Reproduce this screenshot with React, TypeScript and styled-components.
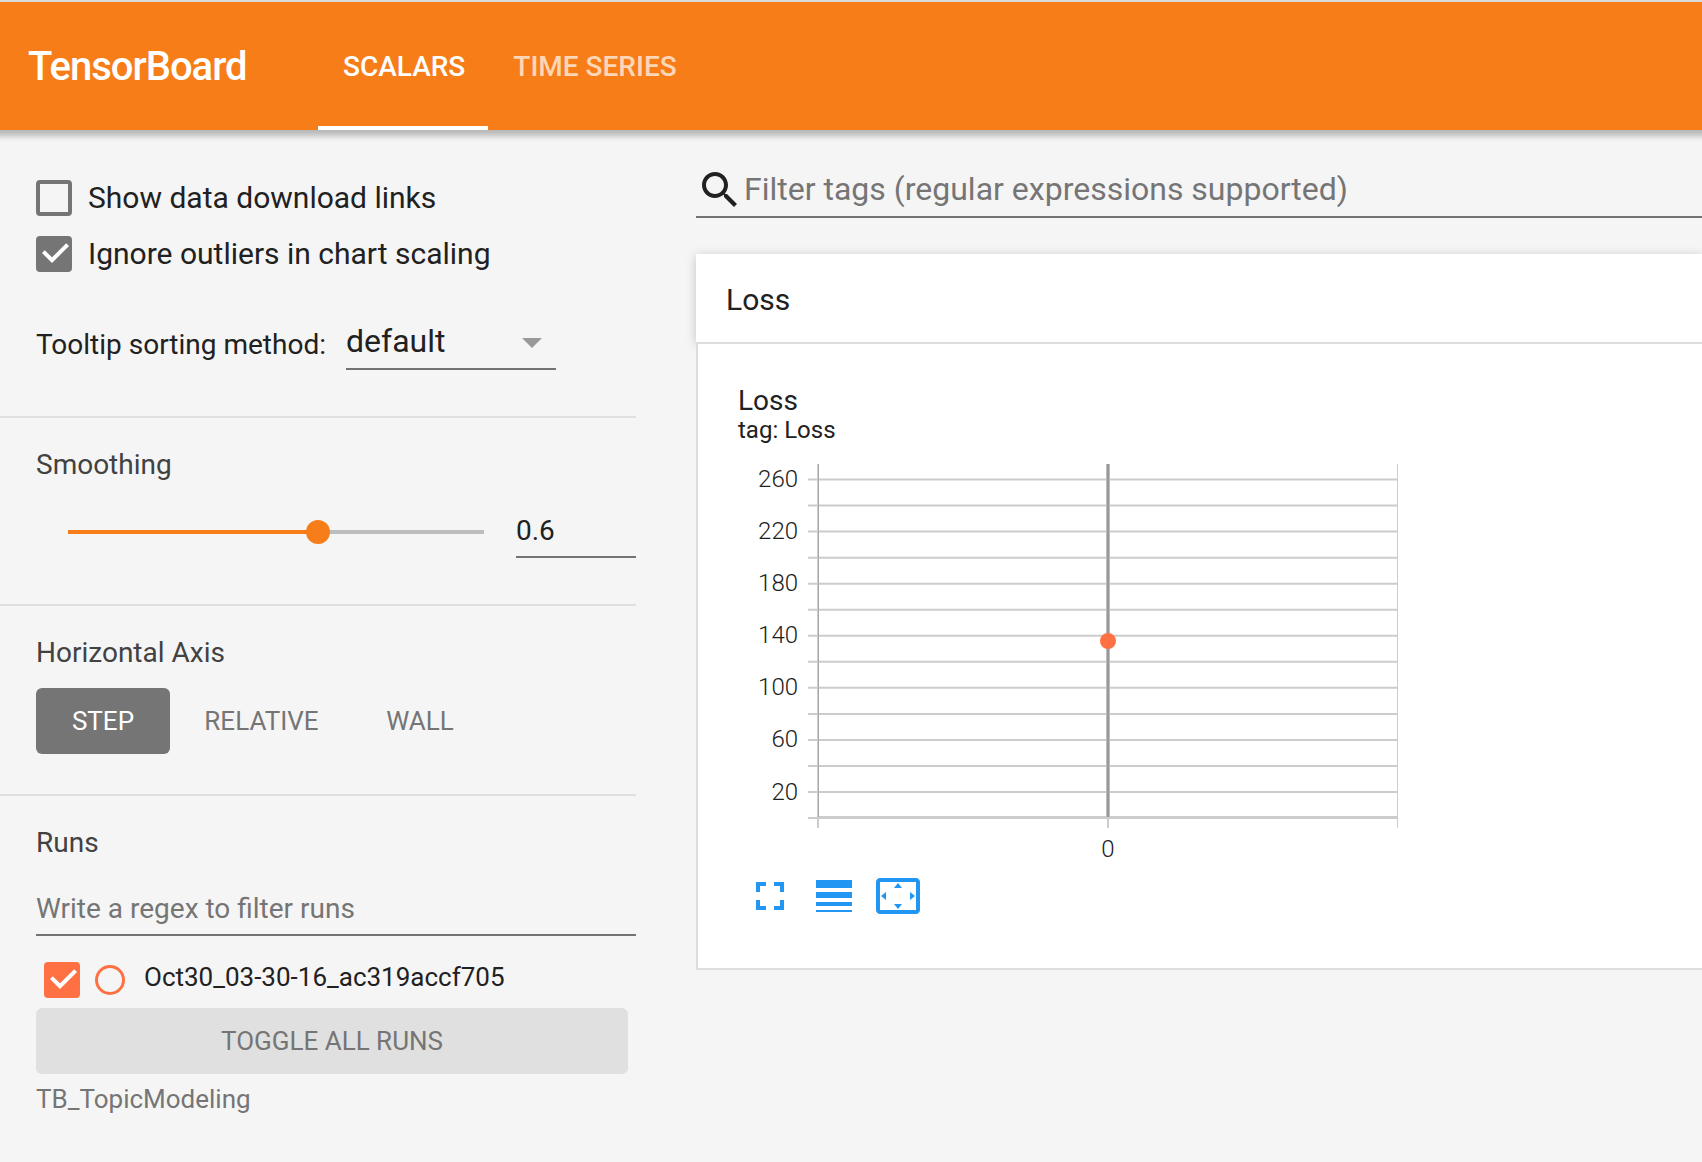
import React from "react";
import styled, { createGlobalStyle, css } from "styled-components";

const GlobalStyle = createGlobalStyle`
  * { box-sizing: border-box; }
  body {
    margin: 0;
    background: #f5f5f5;
    color: #212121;
    font-family: Roboto, "Noto Sans", sans-serif;
    -webkit-font-smoothing: antialiased;
  }
`;

const Page = styled.div`
  display: flex;
  flex-direction: column;
  height: 1162px;
  overflow: hidden;
`;

const Header = styled.header`
  position: relative;
  z-index: 1;
  display: flex;
  flex: none;
  height: 130px;
  padding-left: 28px;
  background: #f77d18;
  border-top: 2px solid #d9d9d9;
  box-shadow: 0 0 6px 6px rgba(0, 0, 0, 0.25);
`;

const Title = styled.h1`
  width: 290px;
  margin: 0;
  color: #fff;
  font-size: 40px;
  font-weight: 500;
  letter-spacing: -1px;
  line-height: 130px;
`;

const Tab = styled.button<{ $active?: boolean }>`
  height: 128px;
  padding: 5px 23px 0 25px;
  border: 0;
  border-bottom: 4px solid ${(p) => (p.$active ? "#fff" : "transparent")};
  background: none;
  color: ${(p) => (p.$active ? "#fff" : "rgba(255, 255, 255, 0.7)")};
  font: 500 28px Roboto, sans-serif;
`;

const Columns = styled.div`
  display: flex;
  flex: 1;
  min-height: 0;
`;

const Sidebar = styled.aside`
  flex: none;
  width: 636px;
`;

const Section = styled.section<{ $height: number; $top: number; $last?: boolean }>`
  height: ${(p) => p.$height}px;
  padding: ${(p) => p.$top}px 0 0 36px;
  border-bottom: ${(p) => (p.$last ? "0" : "2px solid #e0e0e0")};
`;

const CheckRow = styled.label`
  display: flex;
  align-items: center;
  gap: 16px;
  height: 36px;
  margin-bottom: 20px;
  font-size: 30px;
  line-height: 36px;
`;

const Box = styled.span<{ $fill?: string }>`
  display: flex;
  flex: none;
  width: 36px;
  height: 36px;
  border-radius: 4px;
  border: ${(p) => (p.$fill ? "0" : "4px solid #757575")};
  background: ${(p) => p.$fill ?? "transparent"};
`;

const SortRow = styled.div`
  display: flex;
  height: 60px;
  margin-top: 38px;
  font-size: 28px;
`;

const SortLabel = styled.span`
  width: 310px;
  padding-top: 18px;
  line-height: 34px;
`;

const Dropdown = styled.div`
  display: flex;
  align-items: center;
  justify-content: space-between;
  width: 210px;
  height: 60px;
  padding: 4px 14px 0 0;
  border-bottom: 2px solid #737373;
  font-size: 32px;
`;

const Caret = styled.span`
  border: 10px solid transparent;
  border-top-color: #999;
  border-bottom: 0;
  margin-top: 4px;
`;

const Heading = styled.h3`
  margin: 0;
  color: #424242;
  font-size: 28px;
  font-weight: 400;
  line-height: 34px;
`;

const SliderRow = styled.div`
  display: flex;
  align-items: center;
  height: 52px;
  margin-top: 24px;
  padding-left: 32px;
`;

const Track = styled.div`
  display: flex;
  align-items: center;
  width: 416px;
  height: 4px;
  margin-right: 32px;
  background: #bdbdbd;
`;

const TrackFill = styled.div`
  height: 4px;
  background: #f77d18;
`;

const Knob = styled.div`
  flex: none;
  width: 24px;
  height: 24px;
  margin-left: -12px;
  border-radius: 50%;
  background: #f77d18;
`;

const underlined = css`
  border-bottom: 2px solid #737373;
  font-size: 28px;
`;

const NumberField = styled.div`
  ${underlined}
  width: 120px;
  height: 52px;
  line-height: 49px;
`;

const ButtonRow = styled.div`
  display: flex;
  margin-top: 18px;
`;

const Button = styled.button<{ $bg?: string; $color?: string; $width: number }>`
  display: block;
  width: ${(p) => p.$width}px;
  height: 66px;
  padding: 0;
  border: 0;
  border-radius: 6px;
  background: ${(p) => p.$bg ?? "transparent"};
  color: ${(p) => p.$color ?? "#757575"};
  font: 400 26px Roboto, sans-serif;
`;

const RegexField = styled.div`
  ${underlined}
  height: 54px;
  margin-top: 22px;
  color: #757575;
  line-height: 53px;
`;

const RunRow = styled.div`
  display: flex;
  align-items: center;
  height: 36px;
  margin: 26px 0 10px;
  padding-left: 8px;
  font-size: 26px;
`;

const RunDot = styled.span`
  width: 30px;
  height: 30px;
  margin: 0 19px 0 15px;
  border: 3px solid #ff7043;
  border-radius: 50%;
`;

const RunName = styled.span`
  line-height: 30px;
  margin-top: -6px;
`;

const LogDir = styled.div`
  margin-top: 9px;
  color: #757575;
  font-size: 26px;
  line-height: 32px;
`;

const Main = styled.main`
  flex: 1;
  padding: 24px 0 0 60px;
  min-width: 0;
`;

const Search = styled.div`
  display: flex;
  align-items: center;
  height: 64px;
  padding-top: 8px;
  border-bottom: 2px solid #737373;
  color: #757575;
  font-size: 32px;
`;

const Glyph = styled.svg`
  display: block;
  flex: none;
  width: 48px;
  height: 48px;
`;

const SearchGlyph = styled(Glyph)`
  margin-top: 2px;
  fill: #212121;
`;

const CardHeader = styled.h2`
  height: 88px;
  margin: 36px 0 0;
  padding-left: 30px;
  background: #fff;
  box-shadow: 0 2px 10px rgba(0, 0, 0, 0.2);
  font-size: 30px;
  font-weight: 400;
  line-height: 92px;
`;

const CardBody = styled.div`
  position: relative;
  height: 628px;
  padding: 40px 0 0 40px;
  background: #fff;
  border: 2px solid #ddd;
  border-right: 0;
`;

const ChartTitle = styled.div`
  font-size: 28px;
  line-height: 34px;
`;

const ChartTag = styled.div`
  font-size: 24px;
  line-height: 24px;
`;

const ChartSvg = styled.svg`
  display: block;
  width: 670px;
  height: 414px;
  margin-top: 14px;
  font: 300 24px Roboto, sans-serif;
  fill: #212121;
`;

const Actions = styled.div`
  display: flex;
  gap: 16px;
  margin: 2px 0 0 8px;
  fill: #2196f3;
`;

function Check() {
  return (
    <svg width="36" height="36" viewBox="0 0 36 36" fill="none" stroke="#fff" strokeWidth="4">
      <path d="M7.4 15.6L16 24.2L31.6 8.6" />
    </svg>
  );
}

function LossChart() {
  const left = 80;
  const right = 659.5;
  const middle = 370;
  const step = 26.04;
  const ticks = Array.from({ length: 14 }, (_, i) => i * 20);
  const y = (v: number) => 362.04 - (v / 20) * step;
  return (
    <ChartSvg viewBox="0 0 670 414">
      <g stroke="#ccc" strokeWidth="2">
        {ticks.map((v) => (
          <line key={v} x1={left - 10} x2={right} y1={y(v)} y2={y(v)} />
        ))}
        <line x1={left} x2={left} y1="8" y2="372" />
        <line x1={middle} x2={middle} y1="8" y2="372" />
        <line x1={right} x2={right} y1="8" y2="372" strokeWidth="1" />
        <line x1={left} x2={right} y1="361" y2="361" />
      </g>
      <line x1={left + 0.5} x2={left + 0.5} y1="8" y2="361" stroke="#aaa" strokeWidth="1" />
      <line x1={middle} x2={middle} y1="8" y2="361" stroke="#bdbdbd" strokeWidth="4" />
      <line x1={middle} x2={middle} y1="8" y2="361" stroke="#999" strokeWidth="2" />
      <circle cx={middle} cy="185" r="8" fill="#ff7043" />
      {ticks
        .filter((v) => v % 40 === 20)
        .map((v) => (
          <text key={v} x="60" y={y(v) + 7.5} textAnchor="end">
            {v}
          </text>
        ))}
      <text x={middle} y="401" textAnchor="middle">0</text>
    </ChartSvg>
  );
}

export default function App() {
  return (
    <Page>
      <GlobalStyle />
      <Header>
        <Title>TensorBoard</Title>
        <Tab $active>SCALARS</Tab>
        <Tab>TIME SERIES</Tab>
      </Header>
      <Columns>
        <Sidebar>
          <Section $height={288} $top={50}>
            <CheckRow>
              <Box />
              Show data download links
            </CheckRow>
            <CheckRow>
              <Box $fill="#757575"><Check /></Box>
              Ignore outliers in chart scaling
            </CheckRow>
            <SortRow>
              <SortLabel>Tooltip sorting method:</SortLabel>
              <Dropdown>
                default
                <Caret />
              </Dropdown>
            </SortRow>
          </Section>
          <Section $height={188} $top={30}>
            <Heading>Smoothing</Heading>
            <SliderRow>
              <Track>
                <TrackFill style={{ width: `${0.6 * 100}%` }} />
                <Knob />
              </Track>
              <NumberField>0.6</NumberField>
            </SliderRow>
          </Section>
          <Section $height={190} $top={30}>
            <Heading>Horizontal Axis</Heading>
            <ButtonRow>
              <Button $width={134} $bg="#757575" $color="#fff">STEP</Button>
              <Button $width={183}>RELATIVE</Button>
              <Button $width={134}>WALL</Button>
            </ButtonRow>
          </Section>
          <Section $height={366} $top={30} $last>
            <Heading>Runs</Heading>
            <RegexField>Write a regex to filter runs</RegexField>
            <RunRow>
              <Box $fill="#ff7043"><Check /></Box>
              <RunDot />
              <RunName>Oct30_03-30-16_ac319accf705</RunName>
            </RunRow>
            <Button $width={592} $bg="#e0e0e0">TOGGLE ALL RUNS</Button>
            <LogDir>TB_TopicModeling</LogDir>
          </Section>
        </Sidebar>
        <Main>
          <Search>
            <SearchGlyph viewBox="0 0 24 24">
              <path d="M15.5 14h-.79l-.28-.27C15.41 12.59 16 11.11 16 9.5 16 5.91 13.09 3 9.5 3S3 5.91 3 9.5 5.91 16 9.5 16c1.61 0 3.09-.59 4.23-1.57l.27.28v.79l5 4.99L20.49 19l-4.99-5zm-6 0C7.01 14 5 11.99 5 9.5S7.01 5 9.5 5 14 7.01 14 9.5 11.99 14 9.5 14z" />
            </SearchGlyph>
            Filter tags (regular expressions supported)
          </Search>
          <CardHeader>Loss</CardHeader>
          <CardBody>
            <ChartTitle>Loss</ChartTitle>
            <ChartTag>tag: Loss</ChartTag>
            <LossChart />
            <Actions>
              <Glyph viewBox="0 0 24 24">
                <path d="M7 14H5v5h5v-2H7v-3zm-2-4h2V7h3V5H5v5zm12 7h-3v2h5v-5h-2v3zM14 5v2h3v3h2V5h-5z" />
              </Glyph>
              <Glyph viewBox="0 0 24 24">
                <path d="M3 17h18v-2H3v2zm0 3h18v-1H3v1zm0-7h18v-3H3v3zm0-9v4h18V4H3z" />
              </Glyph>
              <Glyph viewBox="0 0 24 24">
                <path d="M12.01 5.5L10 8h4l-1.99-2.5zM18 10v4l2.5-1.99L18 10zM6 10l-2.5 2.01L6 14v-4zm8 6h-4l2.01 2.5L14 16zm7-13H3c-1.1 0-2 .9-2 2v14c0 1.1.9 2 2 2h18c1.1 0 2-.9 2-2V5c0-1.1-.9-2-2-2zm0 16.01H3V4.99h18v14.02z" />
              </Glyph>
            </Actions>
          </CardBody>
        </Main>
      </Columns>
    </Page>
  );
}
